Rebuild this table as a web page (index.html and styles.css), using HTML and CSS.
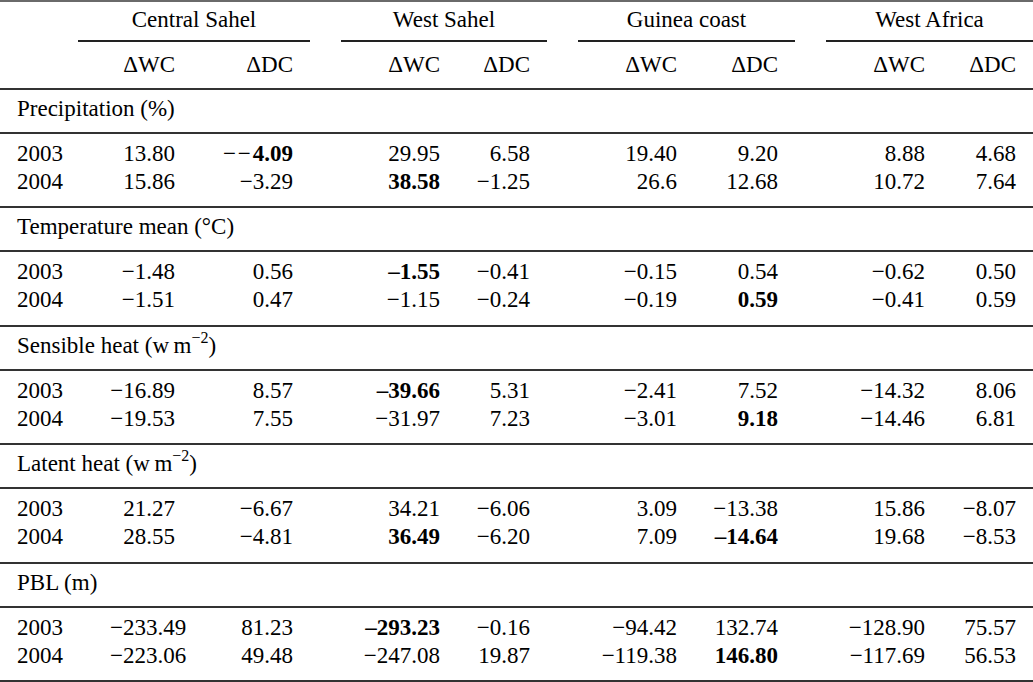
FILE: index.html
```html
<!DOCTYPE html>
<html lang="en">
<head>
<meta charset="utf-8">
<title>Table</title>
<link rel="stylesheet" href="styles.css">
</head>
<body>
<div class="table">
  <div class="groups">
    <div class="group"><span>Central Sahel</span><div class="cmid"></div></div>
    <div class="group"><span>West Sahel</span><div class="cmid"></div></div>
    <div class="group"><span>Guinea coast</span><div class="cmid"></div></div>
    <div class="group"><span>West Africa</span><div class="cmid"></div></div>
  </div>
  <div class="row cols subhead">
    <div class="lab"></div>
    <div>ΔWC</div><div>ΔDC</div>
    <div>ΔWC</div><div>ΔDC</div>
    <div>ΔWC</div><div>ΔDC</div>
    <div>ΔWC</div><div>ΔDC</div>
  </div>

  <div class="heading">Precipitation (%)</div>
  <div class="block">
    <div class="row cols">
      <div class="lab">2003</div>
      <div>13.80</div><div>−&#8202;−&#8202;<b>4.09</b></div>
      <div>29.95</div><div>6.58</div>
      <div>19.40</div><div>9.20</div>
      <div>8.88</div><div>4.68</div>
    </div>
    <div class="row cols">
      <div class="lab">2004</div>
      <div>15.86</div><div>−3.29</div>
      <div><b>38.58</b></div><div>−1.25</div>
      <div>26.6</div><div>12.68</div>
      <div>10.72</div><div>7.64</div>
    </div>
  </div>

  <div class="heading">Temperature mean (°C)</div>
  <div class="block">
    <div class="row cols">
      <div class="lab">2003</div>
      <div>−1.48</div><div>0.56</div>
      <div><b>–1.55</b></div><div>−0.41</div>
      <div>−0.15</div><div>0.54</div>
      <div>−0.62</div><div>0.50</div>
    </div>
    <div class="row cols">
      <div class="lab">2004</div>
      <div>−1.51</div><div>0.47</div>
      <div>−1.15</div><div>−0.24</div>
      <div>−0.19</div><div><b>0.59</b></div>
      <div>−0.41</div><div>0.59</div>
    </div>
  </div>

  <div class="heading">Sensible heat (w&#8201;m<sup>−2</sup>)</div>
  <div class="block">
    <div class="row cols">
      <div class="lab">2003</div>
      <div>−16.89</div><div>8.57</div>
      <div><b>–39.66</b></div><div>5.31</div>
      <div>−2.41</div><div>7.52</div>
      <div>−14.32</div><div>8.06</div>
    </div>
    <div class="row cols">
      <div class="lab">2004</div>
      <div>−19.53</div><div>7.55</div>
      <div>−31.97</div><div>7.23</div>
      <div>−3.01</div><div><b>9.18</b></div>
      <div>−14.46</div><div>6.81</div>
    </div>
  </div>

  <div class="heading">Latent heat (w&#8201;m<sup>−2</sup>)</div>
  <div class="block">
    <div class="row cols">
      <div class="lab">2003</div>
      <div>21.27</div><div>−6.67</div>
      <div>34.21</div><div>−6.06</div>
      <div>3.09</div><div>−13.38</div>
      <div>15.86</div><div>−8.07</div>
    </div>
    <div class="row cols">
      <div class="lab">2004</div>
      <div>28.55</div><div>−4.81</div>
      <div><b>36.49</b></div><div>−6.20</div>
      <div>7.09</div><div><b>–14.64</b></div>
      <div>19.68</div><div>−8.53</div>
    </div>
  </div>

  <div class="heading">PBL (m)</div>
  <div class="block">
    <div class="row cols">
      <div class="lab">2003</div>
      <div>−233.49</div><div>81.23</div>
      <div><b>–293.23</b></div><div>−0.16</div>
      <div>−94.42</div><div>132.74</div>
      <div>−128.90</div><div>75.57</div>
    </div>
    <div class="row cols">
      <div class="lab">2004</div>
      <div>−223.06</div><div>49.48</div>
      <div>−247.08</div><div>19.87</div>
      <div>−119.38</div><div><b>146.80</b></div>
      <div>−117.69</div><div>56.53</div>
    </div>
  </div>
</div>
</body>
</html>
```

FILE: styles.css
```css
html, body {
  margin: 0;
  padding: 0;
  background: #ffffff;
}

body {
  font-family: "Liberation Serif", "Times New Roman", serif;
  font-size: 23px;
  line-height: 28px;
  color: #000;
}

.table {
  width: 1033px;
  border-top: 2px solid #6a6a6a;
  border-bottom: 2px solid #333;
}

.groups {
  display: grid;
  grid-template-columns: 232px 206px 217px 207px;
  column-gap: 31px;
  padding-left: 78px;
  padding-top: 4px;
}

.group {
  text-align: center;
}

.group span {
  display: block;
}

.cmid {
  margin-top: 6px;
  border-top: 2px solid #222;
}

.cols {
  display: grid;
  grid-template-columns: 110px 65px 118px 147px 90px 147px 101px 147px 91px;
  padding-right: 17px;
}

.cols > div {
  text-align: right;
  white-space: nowrap;
}

.cols > .lab {
  text-align: left;
  padding-left: 17px;
}

.subhead {
  padding-top: 9px;
  padding-bottom: 9px;
}

.heading {
  border-top: 2px solid #333;
  padding: 5px 0 9px 17px;
}

.heading sup {
  font-size: 16px;
  line-height: 0;
  vertical-align: 10px;
}

.block {
  border-top: 2px solid #333;
  padding-top: 6px;
  padding-bottom: 10.4px;
}

b {
  font-weight: bold;
}
```
